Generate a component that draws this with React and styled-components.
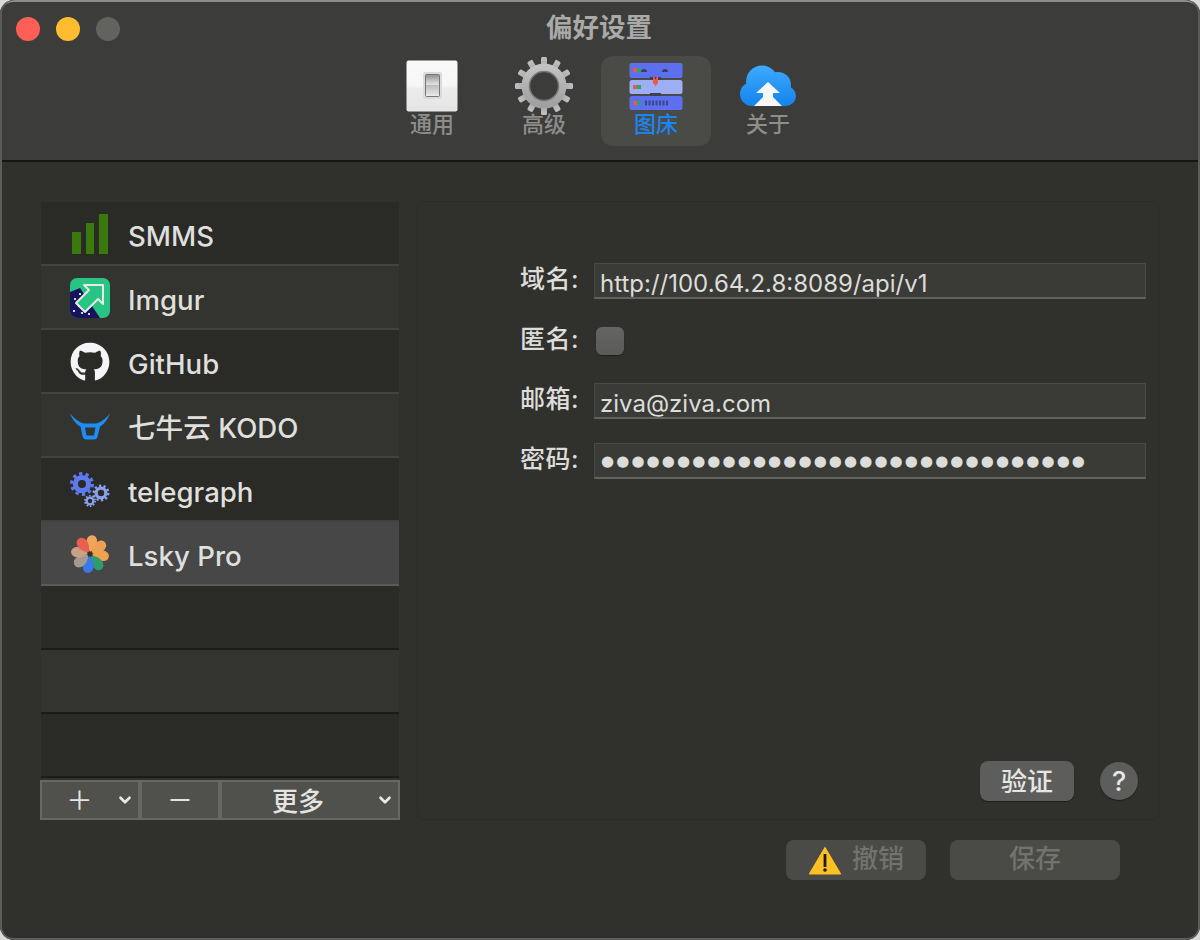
import React from "react";
import styled, { createGlobalStyle } from "styled-components";
import { FaGithub } from "react-icons/fa";
import { ChevronDown } from "lucide-react";

const Global = createGlobalStyle`
  html, body {
    margin: 0;
    padding: 0;
    background: #d9d9d9;
  }
  * {
    box-sizing: border-box;
  }
`;

const SOURCES = [
  { name: "SMMS", icon: <BarsIcon /> },
  { name: "Imgur", icon: <ImgurIcon /> },
  { name: "GitHub", icon: <FaGithub size={40} color="#f4f5f7" /> },
  { name: "七牛云 KODO", icon: <BullIcon /> },
  { name: "telegraph", icon: <GearsIcon /> },
  { name: "Lsky Pro", icon: <FlowerIcon />, selected: true },
  { name: "" },
  { name: "" },
  { name: "" },
];

function Gear({ cx, cy, r, fill, hole }) {
  // teeth come from a dashed ring, body from a thick plain ring
  const toothR = r * 0.86;
  const circ = 2 * Math.PI * toothR;
  const dash = circ / 20;
  return (
    <g fill="none">
      <circle cx={cx} cy={cy} r={toothR} stroke={fill} strokeWidth={r * 0.28} strokeDasharray={`${dash} ${dash}`} />
      <circle cx={cx} cy={cy} r={(r * 0.76 + hole) / 2} stroke={fill} strokeWidth={r * 0.76 - hole} />
    </g>
  );
}

function SwitchIcon() {
  return (
    <svg width="52" height="52" viewBox="0 0 52 52">
      <defs>
        <linearGradient id="sw" x1="0" y1="0" x2="0" y2="1">
          <stop offset="0" stopColor="#fafafa" />
          <stop offset="0.5" stopColor="#f6f6f6" />
          <stop offset="0.55" stopColor="#ececec" />
          <stop offset="1" stopColor="#e4e4e4" />
        </linearGradient>
        <linearGradient id="swk" x1="0" y1="0" x2="0" y2="1">
          <stop offset="0" stopColor="#8f8f8f" />
          <stop offset="0.45" stopColor="#e2e2e2" />
          <stop offset="0.5" stopColor="#bdbdbd" />
          <stop offset="1" stopColor="#ededed" />
        </linearGradient>
      </defs>
      <rect x="0.5" y="0.5" width="51" height="51" rx="2" fill="url(#sw)" />
      <rect x="17" y="12" width="19" height="27" rx="2" fill="#dcdcdc" />
      <rect x="19.5" y="14.5" width="14" height="22" rx="1" fill="url(#swk)" stroke="#777" strokeWidth="1" />
    </svg>
  );
}

function BigGearIcon() {
  return (
    <svg width="58" height="58" viewBox="0 0 58 58">
      <defs>
        <linearGradient id="gg" x1="0" y1="0" x2="0" y2="1">
          <stop offset="0" stopColor="#c2c2c2" />
          <stop offset="1" stopColor="#a0a0a0" />
        </linearGradient>
      </defs>
      <g fill="url(#gg)">
        {Array.from({ length: 12 }).map((_, i) => (
          <rect key={i} x="26" y="0" width="6" height="12" rx="1.5" transform={`rotate(${i * 30} 29 29)`} />
        ))}
      </g>
      <circle cx="29" cy="29" r="18.500" fill="none" stroke="url(#gg)" strokeWidth="8" />
      <circle cx="29" cy="29" r="14.500" fill="#3c3c3a" stroke="#777" strokeWidth="1.500" />
    </svg>
  );
}

function ServerIcon() {
  const Lamps = ({ y }) => (
    <>
      <rect x="4" y={y} width="4" height="4" fill="#e8584c" />
      <rect x="8" y={y} width="4" height="4" fill="#2aa86a" />
    </>
  );
  return (
    <svg width="54" height="48" viewBox="0 0 54 48" style={{ marginTop: 2 }}>
      <rect x="0.500" y="0" width="53" height="15" rx="2.500" fill="#5c70ef" />
      <rect x="0.500" y="17" width="53" height="14" rx="2.500" fill="#9eaef5" />
      <rect x="0.500" y="33" width="53" height="14" rx="2.500" fill="#5c70ef" />
      <Lamps y="5" />
      <Lamps y="22" />
      <Lamps y="38" />
      <path d="M12 9a3 3 0 0 1 6 0zM33 9a3 3 0 0 1 6 0z" fill="#3d3f55" />
      <path d="M21 14h11v3H21zM21 30h11v3H21z" fill="#3d3f55" />
      <path d="M24 14h1.500l1 3 1-3H29v6l-2.500 3-2.500-3z" fill="#ef5a45" />
      {[16, 19.5, 23, 26.500, 30, 33.500, 37].map((x) => (
        <rect key={x} x={x} y="37.500" width="2" height="5" fill="#3d4688" />
      ))}
    </svg>
  );
}

function CloudIcon() {
  return (
    <svg width="56" height="42" viewBox="0 0 56 42">
      <defs>
        <linearGradient id="cl" gradientUnits="userSpaceOnUse" x1="0" y1="0" x2="0" y2="41">
          <stop offset="0" stopColor="#3dabff" />
          <stop offset="1" stopColor="#1582ee" />
        </linearGradient>
      </defs>
      <g fill="url(#cl)">
        <circle cx="22" cy="16.500" r="16" />
        <circle cx="38" cy="20" r="13" />
        <circle cx="12" cy="29" r="12" />
        <circle cx="46" cy="31" r="10" />
        <rect x="12" y="26" width="34" height="15" />
      </g>
      <path d="M28 17l12 11h-7v4l9 9H14l9-9v-4h-7z" fill="#f7f7f7" />
    </svg>
  );
}

function BarsIcon() {
  return (
    <svg width="40" height="40" viewBox="0 0 40 40">
      <rect x="2" y="18" width="9" height="22" fill="#3a7a0c" />
      <rect x="16" y="9" width="8" height="31" fill="#3a7a0c" />
      <rect x="29" y="0" width="9" height="40" fill="#3a7a0c" />
    </svg>
  );
}

function ImgurIcon() {
  return (
    <svg width="40" height="40" viewBox="0 0 40 40">
      <rect width="40" height="40" rx="7" fill="#27c484" />
      <path d="M0 14L10 10 30 40H7a7 7 0 0 1-7-7z" fill="#17145e" />
      <path d="M6 25L19 12l-5-5h19v19l-5-5-13 13z" fill="#27c484" stroke="#e8e8e8" strokeWidth="2" strokeLinejoin="round" />
      {[[10, 16], [5, 21], [4, 33], [12, 35], [19, 36], [9, 28]].map(([x, y]) => (
        <circle key={x + "-" + y} cx={x} cy={y} r="1.100" fill="#fff" />
      ))}
    </svg>
  );
}

function BullIcon() {
  return (
    <svg width="40" height="27" viewBox="0 0 40 27">
      <path
        d="M0 0C4 6 10 10 15 10.500H25C30 10 36 6 40 0 38 7 33 12 30 13.500L28 22Q27.300 26.500 24 26.500H16.500Q13 26.500 12.300 22L10.500 13.500C7 12 2 7 0 0ZM15 14.500L16.500 22.500H24L25.500 14.500Z"
        fill="#1e8cf5"
        fillRule="evenodd"
      />
    </svg>
  );
}

function GearsIcon() {
  return (
    <svg width="40" height="36" viewBox="0 0 40 36">
      <Gear cx={12} cy={12} r={12} fill="#5f79ee" hole={4} />
      <Gear cx={31} cy={21} r={8.500} fill="#8ba0ee" hole={3.200} />
      <Gear cx={20} cy={29} r={6} fill="#8ba0ee" hole={2.200} />
    </svg>
  );
}

function FlowerIcon() {
  const petals = [
    ["#f3a45c", 0],
    ["#f0a052", 45],
    ["#f2a24e", 90],
    ["#2f9c70", 135],
    ["#3b78ea", 180],
    ["#a49a8e", 225],
    ["#c9a088", 270],
    ["#e9604e", 315],
  ];
  return (
    <svg width="40" height="40" viewBox="0 0 40 40">
      {petals.map(([color, deg]) => (
        <path
          key={deg}
          d="M20 18c-5-5-6-9-5-13 1-3 3-4 5-4s4 1 5 4c1 4 0 8-5 13z"
          fill={color}
          transform={`rotate(${deg + 8} 20 20)`}
        />
      ))}
      <circle cx="20" cy="20" r="2.500" fill="#33332f" />
    </svg>
  );
}

function WarningIcon() {
  return (
    <svg width="34" height="30" viewBox="0 0 34 30">
      <path d="M17 1.500L33 28.500a.8.8 0 0 1-.7 1H1.700a.8.8 0 0 1-.7-1z" fill="#fbc124" />
      <rect x="15.600" y="9" width="2.800" height="13" fill="#1b1b12" />
      <circle cx="17" cy="25" r="1.800" fill="#1b1b12" />
    </svg>
  );
}

const TABS = [
  { label: "通用", icon: <SwitchIcon /> },
  { label: "高级", icon: <BigGearIcon /> },
  { label: "图床", icon: <ServerIcon />, active: true },
  { label: "关于", icon: <CloudIcon /> },
];

export default function App() {
  return (
    <>
      <Global />
      <Window>
        <TitleBar>
          <TitleRow>
            <Lights>
              <Light color="#ff5f57" />
              <Light color="#febc2e" />
              <Light color="#62625f" />
            </Lights>
            <Title>偏好设置</Title>
          </TitleRow>
          <Tabs>
            {TABS.map((t) => (
              <Tab key={t.label} active={t.active}>
                <TabIcon>{t.icon}</TabIcon>
                <TabLabel active={t.active}>{t.label}</TabLabel>
              </Tab>
            ))}
          </Tabs>
        </TitleBar>
        <Content>
          <Main>
            <Sidebar>
              <List>
                {SOURCES.map((s, i) => (
                  <Row key={i} odd={i % 2 === 1} selected={s.selected} empty={!s.name}>
                    {s.icon && <RowIcon>{s.icon}</RowIcon>}
                    <RowName>{s.name}</RowName>
                  </Row>
                ))}
              </List>
              <ListFooter>
                <FooterCell width={96}>
                  <Sign shifted>+</Sign>
                  <FooterChevron size={18} strokeWidth={3.5} />
                </FooterCell>
                <FooterCell width={76}>
                  <Sign>−</Sign>
                </FooterCell>
                <FooterCell width={176}>
                  <MoreLabel>更多</MoreLabel>
                  <FooterChevron size={18} strokeWidth={3.5} />
                </FooterCell>
              </ListFooter>
            </Sidebar>
            <Panel>
              <Form>
                <FormRow>
                  <FieldLabel>域名:</FieldLabel>
                  <Field>http://100.64.2.8:8089/api/v1</Field>
                </FormRow>
                <FormRow>
                  <FieldLabel>匿名:</FieldLabel>
                  <CheckBox />
                </FormRow>
                <FormRow>
                  <FieldLabel>邮箱:</FieldLabel>
                  <Field>ziva@ziva.com</Field>
                </FormRow>
                <FormRow>
                  <FieldLabel>密码:</FieldLabel>
                  <Field>
                    <Dots>{"●".repeat(32)}</Dots>
                  </Field>
                </FormRow>
              </Form>
              <PanelActions>
                <VerifyButton>验证</VerifyButton>
                <HelpButton>?</HelpButton>
              </PanelActions>
            </Panel>
          </Main>
          <BottomBar>
            <DisabledButton width={140}>
              <WarningIcon />
              <span>撤销</span>
            </DisabledButton>
            <DisabledButton width={170}>
              <span>保存</span>
            </DisabledButton>
          </BottomBar>
        </Content>
      </Window>
    </>
  );
}

const Window = styled.div`
  position: relative;
  width: 1200px;
  height: 940px;
  display: flex;
  flex-direction: column;
  overflow: hidden;
  border-radius: 14px;
  background: #30302c;
  font-family: Inter, "Noto Sans CJK SC", sans-serif;
  &::after {
    content: "";
    position: absolute;
    inset: 0;
    border-radius: 14px;
    pointer-events: none;
    box-shadow: inset 2px 0 0 #5c5c5a, inset -2px 0 0 #5c5c5a, inset 0 -2px 0 #5c5c5a;
  }
`;

const TitleBar = styled.header`
  height: 162px;
  flex: none;
  background: #3c3c3a;
  border-top: 2px solid #8c8c8a;
  border-bottom: 2px solid #151513;
  border-radius: 14px 14px 0 0;
`;

const TitleRow = styled.div`
  height: 54px;
  display: grid;
  grid-template-columns: 1fr auto 1fr;
  align-items: center;
`;

const Lights = styled.div`
  display: flex;
  gap: 16px;
  padding-left: 16px;
`;

const Light = styled.span`
  width: 24px;
  height: 24px;
  border-radius: 50%;
  background: ${(p) => p.color};
`;

const Title = styled.h1`
  margin: 0 2px 0 0;
  padding-bottom: 8px;
  font-size: 26.5px;
  font-weight: 600;
  color: #a9a9a7;
`;

const Tabs = styled.nav`
  display: flex;
  justify-content: center;
`;

const Tab = styled.div`
  width: 110px;
  height: 90px;
  margin: 0 1px;
  padding-top: 4px;
  display: flex;
  flex-direction: column;
  align-items: center;
  border-radius: 12px;
  background: ${(p) => (p.active ? "#4a4a46" : "transparent")};
`;

const TabIcon = styled.div`
  height: 52px;
  display: flex;
  align-items: center;
  justify-content: center;
`;

const TabLabel = styled.span`
  font-size: 22px;
  font-weight: 500;
  line-height: 24px;
  color: ${(p) => (p.active ? "#1a86f0" : "#8d8d8b")};
`;

const Content = styled.div`
  flex: 1;
  display: flex;
  flex-direction: column;
  padding: 39px 41px 0 41px;
`;

const Main = styled.div`
  height: 619px;
  display: flex;
  gap: 18px;
`;

const Sidebar = styled.aside`
  width: 358px;
  flex: none;
  display: flex;
  flex-direction: column;
`;

const List = styled.ul`
  margin: 1px 0 0;
  padding: 0;
  list-style: none;
  height: 578px;
`;

const Row = styled.li`
  height: 64px;
  display: flex;
  align-items: center;
  gap: 18px;
  padding-left: 29px;
  border-bottom: 2px solid ${(p) => (p.empty ? "#1b1b19" : p.selected ? "#5a5a58" : "#42423f")};
  background: ${(p) => (p.selected ? "#474747" : p.odd ? "#33332f" : "#2a2a26")};
`;

const RowIcon = styled.div`
  width: 40px;
  height: 40px;
  flex: none;
  margin-top: 2px;
  display: flex;
  align-items: center;
  justify-content: center;
`;

const RowName = styled.span`
  font-size: 27.6px;
  line-height: 34px;
  padding-top: 6px;
  font-weight: 500;
  color: #dfdfdd;
`;

const ListFooter = styled.div`
  width: 360px;
  margin: 1px -1px 0;
  height: 40px;
  display: flex;
  gap: 4px;
  padding: 2px;
  background: #676765;
`;

const FooterCell = styled.div`
  width: ${(p) => p.width}px;
  position: relative;
  display: flex;
  align-items: center;
  justify-content: center;
  background: #50504c;
  color: #e4e4e2;
`;

const FooterChevron = styled(ChevronDown)`
  position: absolute;
  right: 4px;
  top: 9px;
  color: #e8e8e6;
`;

const Sign = styled.span`
  font-size: 44px;
  font-weight: 200;
  line-height: 36px;
  padding-bottom: 6px;
  margin-right: ${(p) => (p.shifted ? "21px" : "0")};
`;

const MoreLabel = styled.span`
  font-size: 26px;
  font-weight: 500;
  line-height: 34px;
  padding-top: 4px;
  margin-right: 24px;
`;

const Panel = styled.section`
  flex: 1;
  min-width: 0;
  display: flex;
  flex-direction: column;
  justify-content: space-between;
  padding: 61px 12px 18px 0;
  border: 1px solid #2c2c28;
  border-radius: 6px;
`;

const Form = styled.div`
  display: flex;
  flex-direction: column;
  gap: 24px;
`;

const FormRow = styled.div`
  height: 36px;
  display: flex;
  align-items: center;
  gap: 15px;
`;

const FieldLabel = styled.label`
  width: 161px;
  flex: none;
  padding-bottom: 8px;
  text-align: right;
  font-size: 25px;
  font-weight: 500;
  color: #dcdcda;
  letter-spacing: 0.5px;
`;

const Field = styled.div`
  flex: 1;
  min-width: 0;
  height: 36px;
  padding: 6px 5px 0;
  display: flex;
  align-items: center;
  white-space: nowrap;
  overflow: hidden;
  font-size: 24px;
  color: #dcdcda;
  background: #3a3a37;
  border: 1px solid #4a4a46;
  border-bottom: 2px solid #62625e;
`;

const Dots = styled.span`
  font-family: "DejaVu Sans", sans-serif;
  font-size: 15px;
  letter-spacing: 2.1px;
  margin-bottom: 5px;
  margin-left: 1px;
`;

const CheckBox = styled.span`
  width: 28px;
  height: 28px;
  margin-left: 2px;
  border-radius: 6px;
  background: linear-gradient(#656563, #5a5a58);
  box-shadow: 0 1px 1px #20201d;
`;

const PanelActions = styled.div`
  display: flex;
  justify-content: flex-end;
  align-items: center;
  gap: 26px;
  padding-right: 8px;
`;

const VerifyButton = styled.button`
  width: 94px;
  height: 40px;
  border: none;
  border-radius: 8px;
  background: #5d5d5b;
  box-shadow: 0 1px 1px #1d1d1a;
  color: #e6e6e4;
  font-family: inherit;
  font-size: 26px;
  font-weight: 500;
  padding: 0 0 6px;
`;

const HelpButton = styled.button`
  width: 38px;
  height: 38px;
  border: none;
  border-radius: 50%;
  background: #5d5d5b;
  box-shadow: 0 1px 1px #1d1d1a;
  color: #e6e6e4;
  font-family: inherit;
  font-size: 27px;
  font-weight: 500;
  padding: 0;
`;

const BottomBar = styled.div`
  margin-top: 20px;
  display: flex;
  justify-content: flex-end;
  gap: 24px;
  padding-right: 39px;
`;

const DisabledButton = styled.button`
  width: ${(p) => p.width}px;
  height: 40px;
  padding: 0;
  border: none;
  border-radius: 8px;
  background: #4a4a46;
  color: #72726f;
  font-family: inherit;
  font-size: 26px;
  font-weight: 500;
  display: flex;
  align-items: center;
  justify-content: center;
  gap: 10px;
  span {
    padding-bottom: 8px;
  }
`;
